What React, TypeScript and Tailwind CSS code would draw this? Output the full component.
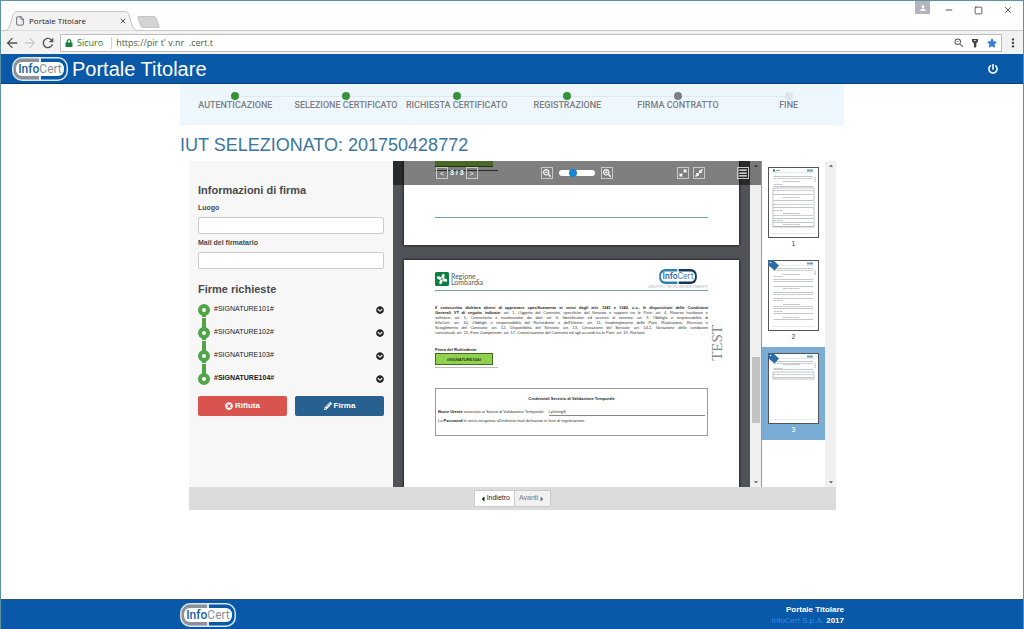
import { useState } from 'react'
import { FaCaretLeft, FaCaretRight, FaChevronCircleDown, FaLock, FaPencilAlt, FaPowerOff, FaSearchMinus, FaSearchPlus, FaStar, FaTimesCircle } from 'react-icons/fa'
import { MdArrowBack, MdArrowDropDown, MdArrowDropUp, MdArrowForward, MdMoreVert, MdPerson, MdRefresh, MdZoomOut } from 'react-icons/md'
import { File, Menu, Minus, Square, X } from 'lucide-react'

const steps = [
  { label: 'AUTENTICAZIONE', state: 'done' },
  { label: 'SELEZIONE CERTIFICATO', state: 'done' },
  { label: 'RICHIESTA CERTIFICATO', state: 'done' },
  { label: 'REGISTRAZIONE', state: 'done' },
  { label: 'FIRMA CONTRATTO', state: 'current' },
  { label: 'FINE', state: 'todo' },
]

const dotColors: Record<string, string> = {
  done: 'bg-[#35943a]',
  current: 'bg-[#7b7f86]',
  todo: 'bg-[#dfe5ea]',
}

const signatures = ['#SIGNATURE101#', '#SIGNATURE102#', '#SIGNATURE103#', '#SIGNATURE104#']

const clauseLines = [
  "software; art. 5, Connettività e trasmissione dei dati; art. 6, Identificatori ed accessi al sistema; art. 9, Obblighi e responsabilità di",
  "InfoCert; art. 10, Obblighi e responsabilità del Richiedente e dell'Utente; art. 11, Inadempimento delle Parti, Risoluzione, Recesso e",
  "Scioglimento del Contratto; art. 12, Disponibilità del Servizio; art. 13, Cessazione del Servizio; art. 14.2, Variazione delle condizioni",
]

// InfoCert capsule, split in a left and a right half
function InfoCertLogo({ className, onPaper = false }: { className: string; onPaper?: boolean }) {
  const left = onPaper ? '#2f7fa8' : '#8d9299'
  const right = onPaper ? '#12365c' : '#0a58a8'
  return (
    <svg viewBox="0 0 56 24" className={className} role="img" aria-label="InfoCert">
      <rect x="0" y="0" width="56" height="24" rx="10" fill={onPaper ? '#fff' : '#dbe8f5'} />
      <path d="M27 1.500H10a8.500 8.500 0 0 0-8.500 8.500v4a8.500 8.500 0 0 0 8.500 8.500h17z" fill={left} />
      <path d="M29 1.500h17a8.500 8.500 0 0 1 8.500 8.500v4a8.500 8.500 0 0 1-8.500 8.500H29z" fill={right} />
      <rect x="4" y="5" width="48" height="14" rx="6" fill="#fff" />
      <text x="28" y="16" textAnchor="middle" fontSize="12" fontFamily="Roboto, sans-serif">
        <tspan fill="#1f5f9f" fontWeight="500">Info</tspan>
        <tspan fill={onPaper ? '#4d86ad' : '#8a8f98'}>Cert</tspan>
      </text>
    </svg>
  )
}

function BrowserBar() {
  const [url, setUrl] = useState("https://pir t' v.nr  .cert.t")

  return (
    <div className="bg-white">
      <div className="flex h-[30px] items-stretch justify-between border-b border-[#c9c9c9]">
        <div className="flex items-end">
          <div className="relative ml-1 flex h-[19px] w-[132px] items-center pl-2.5 pr-2.5">
            <svg viewBox="0 0 132 20" preserveAspectRatio="none" className="absolute left-0 top-0 h-5 w-full" aria-hidden="true">
              <path d="M0 19.5C3 19 4 17 5 14L8 4C9 1.500 10 .5 12 .5H120C122 .5 123 1.500 124 4L127 14C128 17 129 19 132 19.500" fill="#f2f2f2" stroke="#c4c4c4" />
            </svg>
            <File className="relative size-2.5 text-gray-600" strokeWidth={2} />
            <span className="relative ml-1 flex-1 font-['Open_Sans',sans-serif] text-[8px] text-[#222]">Portale Titolare</span>
            <button aria-label="Chiudi scheda" className="relative">
              <X className="size-2 text-gray-600" strokeWidth={3} />
            </button>
          </div>
          <button aria-label="Nuova scheda" className="mb-0.5 ml-0.5 h-3 w-[19px] skew-x-[20deg] rounded-xs border border-[#c4c4c4] bg-[#d3d3d3]" />
        </div>
        <div className="flex h-[18px] items-center pr-2.5 text-[#333]">
          <button aria-label="Profilo" className="mr-3.5 flex h-[13px] w-[15px] items-center justify-center self-start bg-[#b4b5ba] text-white">
            <MdPerson className="size-2" />
          </button>
          <button aria-label="Riduci" className="mr-5"><Minus className="size-2.5" /></button>
          <button aria-label="Ingrandisci" className="mr-5"><Square className="size-[9px]" strokeWidth={2} /></button>
          <button aria-label="Chiudi"><X className="size-2.5" strokeWidth={2} /></button>
        </div>
      </div>
      <div className="flex h-[23px] items-center bg-[#f2f2f2] pl-[3px] pr-[3px]">
        <button aria-label="Indietro nella cronologia" className="text-[#555]"><MdArrowBack className="size-4" /></button>
        <button aria-label="Avanti nella cronologia" disabled className="ml-0.5 text-[#ccc]"><MdArrowForward className="size-4" /></button>
        <button aria-label="Ricarica" className="ml-0.5 text-[#555]"><MdRefresh className="size-4" /></button>
        <div className="ml-1 flex h-[18px] flex-1 items-center border border-[#bdbdbd] bg-white px-1 font-['Open_Sans',sans-serif] text-[9px]">
          <FaLock className="size-2 text-[#16803c]" />
          <span className="ml-1 border-r border-gray-300 pr-2 leading-3 text-[#16803c]">Sicuro</span>
          <input
            aria-label="Indirizzo"
            value={url}
            onChange={(e) => setUrl(e.target.value)}
            className="ml-1 min-w-0 flex-1 leading-3 text-[#3f5b4d] outline-none"
          />
          <button aria-label="Zoom"><MdZoomOut className="size-3 text-[#555]" /></button>
          <button aria-label="Password salvata" className="ml-1.5">
            <svg viewBox="0 0 8 10" className="h-2.5 w-2" fill="#444">
              <path d="M1 1h6v2.500L5.300 5.500V9L4 9.800 2.900 9V5.500L1 3.500z" />
              <path d="M2.800 2h2.400v1H2.800z" fill="#ccc" />
            </svg>
          </button>
          <button aria-label="Preferiti" className="ml-2"><FaStar className="size-2.5 text-[#3b7ddd]" /></button>
        </div>
        <button aria-label="Menu del browser" className="ml-1"><MdMoreVert className="size-3.5 text-[#444]" /></button>
      </div>
    </div>
  )
}

function StepBar() {
  return (
    <ol className="grid h-[41px] grid-cols-6 bg-[#eef6fe] pt-2">
      {steps.map((step, i) => (
        <li key={step.label} className="relative flex flex-col items-center">
          {i > 0 && <span className="absolute right-1/2 top-1 h-px w-full bg-[#e0e8f0]" />}
          <span className={`relative z-10 size-2 rounded-full ${dotColors[step.state]}`} />
          <span className="whitespace-nowrap font-[Roboto,sans-serif] text-[9px] font-medium leading-[10px] text-[#7c7f83]">{step.label}</span>
        </li>
      ))}
    </ol>
  )
}

function SignaturePanel() {
  const [luogo, setLuogo] = useState('')
  const [mail, setMail] = useState('')

  return (
    <form onSubmit={(e) => e.preventDefault()} className="w-[204px] shrink-0 bg-[#f7f7f7] px-[9px] pt-[22px] text-[#4a4a4a]">
      <h2 className="text-[11px] font-bold leading-[14px]">Informazioni di firma</h2>
      <label htmlFor="luogo" className="mt-1.5 block text-[7px] font-bold leading-[10px]">Luogo</label>
      <input
        id="luogo"
        value={luogo}
        onChange={(e) => setLuogo(e.target.value)}
        className="mt-1 block h-[17px] w-full rounded-xs border border-[#ccc] bg-white px-1 text-[8px]"
      />
      <label htmlFor="mail" className="mt-1 block text-[7px] font-bold leading-[10px]">Mail del firmatario</label>
      <input
        id="mail"
        type="email"
        value={mail}
        onChange={(e) => setMail(e.target.value)}
        className="mt-1 block h-[17px] w-full rounded-xs border border-[#ccc] bg-white px-1 text-[8px]"
      />

      <h2 className="mt-[13px] text-[11px] font-bold leading-[14px]">Firme richieste</h2>
      <ul className="mt-0.5">
        {signatures.map((name, i) => (
          <li key={name} className="relative flex h-[23px] items-center text-[#222]">
            {i < signatures.length - 1 && <span className="absolute left-1 top-4 h-4 w-1 bg-[#4fa548]" />}
            <span className="relative size-3 rounded-full border-4 border-[#4fa548] bg-white" />
            {i < signatures.length - 1 && <span className="absolute left-0 top-[19px] h-px w-3 bg-[#f7f7f7]" />}
            <span className={i === signatures.length - 1 ? 'ml-1 text-[7px] font-bold' : 'ml-1 text-[7px]'}>{name}</span>
            <button type="button" aria-label={`Dettagli ${name}`} className="ml-auto">
              <FaChevronCircleDown className="size-2 text-[#222]" />
            </button>
          </li>
        ))}
      </ul>

      <div className="mt-1.5 grid grid-cols-2 gap-2 text-[8px] font-bold text-white">
        <button type="button" className="flex h-5 items-center justify-center gap-0.5 rounded-xs bg-[#d9534f]">
          <FaTimesCircle className="size-2" />
          Rifiuta
        </button>
        <button type="submit" className="flex h-5 items-center justify-center gap-0.5 rounded-xs bg-[#286090]">
          <FaPencilAlt className="size-2" />
          Firma
        </button>
      </div>
    </form>
  )
}

function ViewerToolbar() {
  const [zoom, setZoom] = useState(35)
  const button = 'flex size-3 items-center justify-center border border-[#c8c8c8] text-[7px] leading-none'

  return (
    <div className="absolute inset-x-0 top-0 flex h-6 items-center justify-between bg-black/50 pl-[43px] pr-3 text-white">
      <div className="flex items-center gap-0.5">
        <button aria-label="Pagina precedente" className={button}>&lt;</button>
        <span className="text-[7px] font-bold">3 / 3</span>
        <button aria-label="Pagina successiva" className={button}>&gt;</button>
      </div>
      <div className="flex items-center gap-1.5">
        <button aria-label="Riduci zoom" className={button}><FaSearchMinus className="size-2" /></button>
        <input
          type="range"
          aria-label="Zoom documento"
          value={zoom}
          onChange={(e) => setZoom(Number(e.target.value))}
          className="h-1.5 w-9 appearance-none rounded-full bg-white [&::-webkit-slider-thumb]:size-2 [&::-webkit-slider-thumb]:appearance-none [&::-webkit-slider-thumb]:rounded-full [&::-webkit-slider-thumb]:bg-[#1787d4]"
        />
        <button aria-label="Aumenta zoom" className={button}><FaSearchPlus className="size-2" /></button>
      </div>
      <div className="flex items-center gap-1">
        <button aria-label="Espandi" className={button}>
          <svg viewBox="0 0 8 8" className="size-2" fill="#fff">
            <path d="M4 .5h3.500V4zM.5 4v3.500H4z" />
            <path d="M6.500 1.500L4.700 3.300M3.300 4.700L1.500 6.500" stroke="#fff" strokeWidth="1.500" />
          </svg>
        </button>
        <button aria-label="Comprimi" className={button}>
          <svg viewBox="0 0 8 8" className="size-2" fill="#fff">
            <path d="M4.100 .7v3.200h3.200zM.7 4.100h3.200v3.200z" />
            <path d="M7.500 .5L5 3M.5 7.500L3 5" stroke="#fff" strokeWidth="1.500" />
          </svg>
        </button>
        <button aria-label="Miniature" className={`ml-7 ${button}`}><Menu className="size-2.5 shrink-0" strokeWidth={3} /></button>
      </div>
    </div>
  )
}

function ContractPage() {
  return (
    <article className="relative h-[240px] bg-white px-[31px] pt-2 text-[4px] leading-[5px] text-[#333] shadow-[0_0_3px_#000]">
      <header className="flex h-[23px] items-start justify-between border-b border-[#6fa3b4]">
        <div className="flex items-center pt-1">
          <svg viewBox="0 0 14 14" className="size-3.5" aria-hidden="true">
            <rect width="14" height="14" rx="1.500" fill="#0b7f3f" />
            <g fill="#fff">
              <ellipse cx="7" cy="4" rx="1.500" ry="2.500" transform="rotate(20 7 7)" />
              <ellipse cx="7" cy="4" rx="1.500" ry="2.500" transform="rotate(110 7 7)" />
              <ellipse cx="7" cy="4" rx="1.500" ry="2.500" transform="rotate(200 7 7)" />
              <ellipse cx="7" cy="4" rx="1.500" ry="2.500" transform="rotate(290 7 7)" />
            </g>
          </svg>
          <p className="ml-0.5 font-[Lato,sans-serif] text-[7px] leading-[6px] text-[#555]">
            Regione
            <br />
            Lombardia
          </p>
        </div>
        <div className="flex flex-col items-center">
          <InfoCertLogo onPaper className="h-[17px] w-10" />
          <span className="leading-[4px] text-[#b4b4b4]">GRUPPO TECNOINVESTIMENTI</span>
        </div>
      </header>

      <div className="mt-3.5 whitespace-nowrap text-justify [text-align-last:justify]">
        <p className="font-bold text-[#222]">Il sottoscritto dichiara altresì di approvare specificamente ai sensi degli artt. 1341 e 1342, c.c., le disposizioni delle Condizioni</p>
        <p>
          <strong className="text-[#222]">Generali VT di seguito indicate</strong>: art. 1, Oggetto del Contratto, specifiche del Servizio e rapporti tra le Parti; art. 4, Risorse hardware e
        </p>
        {clauseLines.map((line) => (
          <p key={line}>{line}</p>
        ))}
      </div>
      <p>contrattuali; art. 15, Foro Competente; art. 17, Conservazione del Contratto ed agli accordi tra le Parti; art. 19, Reclami.</p>

      <p className="mt-3 font-bold text-[#222]">Firma del Richiedente</p>
      <div className="mt-px w-[63px] border-b border-[#bbb] pb-0.5">
        <div className="flex h-3 w-[58px] items-center justify-center border border-[#3f6b22] bg-[#92d050] font-bold text-[#1d3b0c]">#SIGNATURE104#</div>
      </div>

      <section className="mt-5 h-12 border border-[#999] px-0.5 pt-[7px]">
        <h3 className="text-center font-bold text-[#222]">Credenziali Servizio di Validazione Temporale</h3>
        <p className="mt-2 flex">
          <span className="whitespace-nowrap"><strong className="text-[#222]">Nome Utente</strong> associato ai Servizi di Validazione Temporale:</span>
          <span className="ml-1 flex-1 border-b border-[#888] pb-px">LyUntngS</span>
        </p>
        <p className="mt-0.5">La <strong className="text-[#222]">Password</strong> le verrà recapitata all'indirizzo mail dichiarato in fase di registrazione.</p>
      </section>

      <span className="absolute right-4 top-[65px] rotate-180 font-['Liberation_Serif',serif] text-[15px] leading-3 text-[#888] [writing-mode:vertical-rl]">TEST</span>
    </article>
  )
}

function ScrollBar({ thumb = false }: { thumb?: boolean }) {
  return (
    <div className="flex w-[11px] shrink-0 flex-col items-center justify-between bg-[#f0f0f0] text-[#555]" aria-hidden="true">
      <MdArrowDropUp className="size-2.5" />
      {thumb && <span className="mb-[54px] mt-auto h-[66px] w-2 bg-[#c1c1c1]" />}
      <MdArrowDropDown className="size-2.5" />
    </div>
  )
}

// Text line positions drawn inside each miniature page
const previews = [
  { tag: false, lines: [9, 11, 14, 17, 19, 23, 27, 30, 33, 37, 40, 43, 46, 48, 51, 53, 55, 57, 59], box: [21, 39] },
  { tag: true, lines: [8, 10, 14, 16, 19, 21, 26, 28, 32, 34, 38, 40, 44, 46, 48, 51, 53, 57, 59], box: null },
  { tag: true, lines: [8, 10, 11, 15, 16, 21, 24], box: [19, 7] },
]

function Thumbnail({ index }: { index: number }) {
  const { tag, lines, box } = previews[index]
  return (
    <svg viewBox="0 0 51 71" className="h-[71px] w-[51px]" aria-hidden="true">
      <rect x=".5" y=".5" width="50" height="70" fill="#fff" stroke="#555" />
      <path d="M39 3.500h6" stroke="#6fa3b4" strokeWidth="2" />
      {!tag && <path d="M5 3.500h2" stroke="#0b7f3f" strokeWidth="2" />}
      {!tag && <path d="M8 3.500h4" stroke="#999" />}
      <path d="M5 5.500h41M5 66.500h41" stroke="#c3d3da" strokeWidth=".5" />
      {lines.map((y, i) => (
        <path
          key={y}
          d={`M${i % 5 === 2 ? 15 : 5.5} ${y}.5H${i % 5 === 2 ? 32 : i % 4 === 3 ? 15 : 45}`}
          stroke="#a9aeb4"
          strokeWidth=".7"
          strokeDasharray={i % 2 ? '3 .5 2 .5' : undefined}
        />
      ))}
      {box && <rect x="5" y={box[0]} width="41" height={box[1]} fill="none" stroke="#999" strokeWidth=".6" />}
      <path d="M47 10v5" stroke="#bbb" />
      {tag && <path d="M0 1.500L2 0h3l6 5.500-4.500 5L0 5z" fill="#2d6ba5" />}
      {tag && <circle cx="2.500" cy="2.500" r=".8" fill="#fff" />}
    </svg>
  )
}

function ThumbnailList() {
  const [selected, setSelected] = useState(2)
  return (
    <nav aria-label="Pagine" className="w-[63px] shrink-0">
      {previews.map((_, i) => (
        <button
          key={i}
          onClick={() => setSelected(i)}
          className={`flex h-[93px] w-full flex-col items-center pt-1.5 text-[7px] leading-3 ${selected === i ? 'bg-[#7aadd6] text-white' : 'text-[#444]'}`}
        >
          <Thumbnail index={i} />
          {i + 1}
        </button>
      ))}
    </nav>
  )
}

export default function App() {
  return (
    <div className="flex min-h-screen flex-col border border-b-0 border-[#5b93a5] bg-white font-['Liberation_Sans',Arial,sans-serif]">
      <BrowserBar />

      <header className="flex h-[30px] items-center border-b border-[#0b3f73] bg-[#0a58a8] pl-[11px] pr-[25px] text-white">
        <InfoCertLogo className="h-6 w-14" />
        <h1 className="ml-1 flex-1 text-xl leading-6">Portale Titolare</h1>
        <button aria-label="Esci"><FaPowerOff className="size-2.5" /></button>
      </header>

      <main className="mx-auto w-full max-w-[664px] flex-1">
        <StepBar />
        <h2 className="pb-1.5 pt-2.5 text-lg leading-5 text-[#3a76a0]">IUT SELEZIONATO: 201750428772</h2>

        <div className="ml-[9px] mr-2">
          <div className="flex h-[326px]">
            <SignaturePanel />
            <div className="relative flex min-w-0 flex-1 overflow-hidden border-r border-[#999]">
              <div className="flex-1 overflow-hidden bg-[#505357] px-[11px]">
                <div className="h-[84px] bg-white px-[31px] shadow-[0_0_3px_#000]">
                  <div className="w-[63px] border-b border-[#555] pb-[3px]">
                    <div className="h-1.5 w-[58px] border-b border-[#3f6b22] bg-[#92d050]" />
                  </div>
                  <div className="mt-[46px] border-b border-[#6fa3b4]" />
                </div>
                <div className="mt-[15px]">
                  <ContractPage />
                </div>
              </div>
              <ScrollBar thumb />
              <ViewerToolbar />
            </div>
            <ThumbnailList />
            <ScrollBar />
          </div>
          <div className="flex h-[23px] items-center justify-center bg-[#dcdcdc] text-[7px]">
            <button className="flex h-[17px] items-center border border-[#ccc] bg-white px-1 text-[#222]">
              <FaCaretLeft className="size-2" />
              Indietro
            </button>
            <button disabled className="flex h-[17px] items-center border border-l-0 border-[#ccc] bg-[#f1f1f1] px-1 text-[#777]">
              Avanti
              <FaCaretRight className="size-2" />
            </button>
          </div>
        </div>
      </main>

      <footer className="border-t border-[#2c4f73] bg-[#0a58a8]">
        <div className="mx-auto flex h-[29px] w-full max-w-[664px] items-center justify-between">
          <InfoCertLogo className="h-6 w-14" />
          <p className="text-right text-[8px] font-bold leading-[11px] text-white">
            Portale Titolare
            <br />
            <a href="#infocert" className="font-normal text-[#2d8be0]">InfoCert S.p.A.</a> 2017
          </p>
        </div>
      </footer>
    </div>
  )
}
